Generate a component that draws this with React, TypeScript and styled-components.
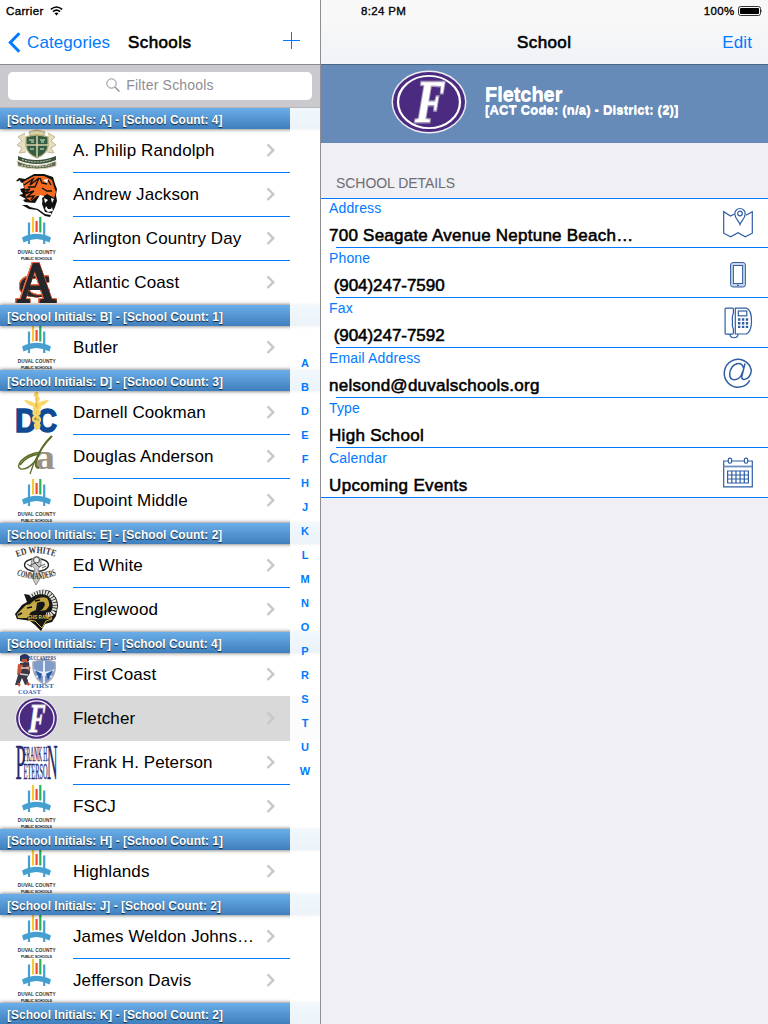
import React from "react";
import styled, { createGlobalStyle } from "styled-components";

const BLUE = "#007aff";
const INK = "#2f5ea3";

const GlobalStyle = createGlobalStyle`
  * { box-sizing: border-box; }
  html, body { margin: 0; padding: 0; }
  body {
    width: 768px;
    height: 1024px;
    overflow: hidden;
    background: #efeff4;
    font-family: "Liberation Sans", Arial, sans-serif;
    color: #000;
  }
  svg { display: block; flex: none; }
`;

const Screen = styled.div`
  display: flex;
  width: 768px;
  height: 1024px;
  overflow: hidden;
`;

const Master = styled.section`
  display: flex;
  flex-direction: column;
  width: 321px;
  border-right: 1px solid #8e8e93;
  background: #fff;
`;

const Detail = styled.section`
  display: flex;
  flex-direction: column;
  width: 447px;
  background: #efeff4;
`;

const TopBar = styled.header<{ $tinted?: boolean }>`
  height: 65px;
  flex: none;
  border-bottom: 1px solid ${(p) => (p.$tinted ? "#4a6687" : "#8a8a8e")};
  background: ${(p) => (p.$tinted ? "linear-gradient(#f8f8f8 35%, #eff2f7)" : "#fff")};
`;

const StatusBar = styled.div<{ $left: number; $right?: number }>`
  display: flex;
  align-items: center;
  height: 20px;
  padding: 1px ${(p) => p.$right ?? 0}px 0 ${(p) => p.$left}px;
`;

const StatusText = styled.span<{ $spacing?: number }>`
  font-size: 11.5px;
  line-height: 20px;
  letter-spacing: ${(p) => p.$spacing ?? 0.35}px;
  -webkit-text-stroke: 0.35px #000;
  white-space: pre;
`;

const Spacer = styled.div`
  flex: 1;
`;

const NavRow = styled.div<{ $pad: string }>`
  display: flex;
  align-items: center;
  height: 44px;
  padding: ${(p) => p.$pad};
`;

const NavLink = styled.a`
  padding-top: 2px;
  color: ${BLUE};
  font-size: 17px;
  line-height: 42px;
  letter-spacing: 0.1px;
`;

const NavTitle = styled.h1`
  margin: 0;
  padding-top: 2px;
  font-size: 17px;
  font-weight: 400;
  line-height: 42px;
  letter-spacing: 0.4px;
  -webkit-text-stroke: 0.6px #000;
`;

const SearchBar = styled.div`
  height: 43px;
  flex: none;
  padding: 7px 8px;
  background: #c9c9ce;
  border-bottom: 1px solid #b4b4b8;
`;

const SearchField = styled.div`
  display: flex;
  align-items: center;
  justify-content: center;
  gap: 6px;
  height: 28px;
  padding-bottom: 2px;
  border-radius: 5px;
  background: #fff;
  color: #8e8e93;
  font-size: 14px;
  letter-spacing: 0.2px;
`;

const ListArea = styled.div`
  position: relative;
  height: 916px;
  overflow: hidden;
`;

const SectionHeader = styled.div`
  position: relative;
  z-index: 1;
  height: 21px;
  padding-left: 7px;
  background: linear-gradient(#6aaee9, #3f7fbd);
  box-shadow: 0 0 4px rgba(0, 0, 0, 0.65);
  color: #fff;
  font-size: 12px;
  font-weight: 700;
  line-height: 24px;
  text-shadow: 0 1px 1px rgba(0, 0, 0, 0.75);
  white-space: pre;
`;

const Row = styled.div<{ $selected?: boolean }>`
  display: flex;
  align-items: center;
  height: 44px;
  padding: 0 45px 0 15px;
  background: ${(p) => (p.$selected ? "#d9d9d9" : "#fff")};
  box-shadow: ${(p) => (p.$selected ? "0 -1px 0 #d9d9d9" : "none")};
`;

const LogoBox = styled.div`
  width: 43px;
  height: 44px;
  margin-right: 15px;
  flex: none;
`;

const RowBody = styled.div<{ $line: boolean }>`
  display: flex;
  align-items: center;
  flex: 1;
  height: 44px;
  margin-right: -15px;
  padding: 0 15px 1px 0;
  border-bottom: 1px solid ${(p) => (p.$line ? BLUE : "transparent")};
`;

const RowName = styled.span`
  flex: 1;
  padding-top: 2px;
  font-size: 17px;
  line-height: 40px;
  letter-spacing: 0.1px;
  white-space: nowrap;
`;

const IndexColumn = styled.nav`
  position: absolute;
  z-index: 2;
  top: 0;
  right: 0;
  bottom: 0;
  display: flex;
  flex-direction: column;
  align-items: center;
  justify-content: center;
  width: 30px;
  padding-top: 1px;
  background: rgba(255, 255, 255, 0.9);
`;

const IndexLetter = styled.span`
  height: 24px;
  color: ${BLUE};
  font-size: 11px;
  font-weight: 700;
  line-height: 24px;
`;

const Hero = styled.div`
  display: flex;
  height: 78px;
  padding: 5px 0 0 70px;
  background: #668bb8;
`;

const HeroText = styled.div`
  display: flex;
  flex-direction: column;
  padding: 16px 0 0 18px;
  color: #fff;
  font-weight: 700;
  white-space: nowrap;
`;

const HeroName = styled.span`
  font-size: 20px;
  line-height: 17px;
  letter-spacing: -0.05px;
  text-shadow: 0 1px 0 #fff;
`;

const HeroMeta = styled.span`
  font-size: 13px;
  line-height: 13px;
  letter-spacing: 0.2px;
  text-shadow: 0 0.5px 0 #fff;
`;

const GroupTitle = styled.h2`
  height: 55px;
  margin: 0;
  padding: 31px 0 0 15px;
  color: #6d6d72;
  font-size: 14px;
  font-weight: 400;
  line-height: 18px;
  letter-spacing: -0.05px;
`;

const Group = styled.div`
  background: linear-gradient(${BLUE}, ${BLUE}) top / 100% 1px no-repeat #fff;
`;

const Field = styled.div<{ $last: boolean }>`
  display: flex;
  align-items: center;
  justify-content: space-between;
  height: 50px;
  padding: 0 15px 0 8px;
  background: linear-gradient(${BLUE}, ${BLUE}) ${(p) => (p.$last ? "0" : "15px")} 49px / 100% 1px no-repeat;
`;

const FieldText = styled.div`
  height: 50px;
`;

const FieldLabel = styled.div`
  color: ${BLUE};
  font-size: 14px;
  line-height: 21px;
  letter-spacing: 0.15px;
`;

const FieldValue = styled.div<{ $spacing: number }>`
  padding-top: 4px;
  font-size: 17px;
  line-height: 25px;
  letter-spacing: ${(p) => p.$spacing}px;
  -webkit-text-stroke: 0.55px #000;
  white-space: pre;
`;

/* ---------- school logos, 43 x 44 ---------- */

const SANS = "Liberation Sans, sans-serif";
const SERIF = "Liberation Serif, serif";

const Duval = () => (
  <svg width="43" height="44" viewBox="0 0 43 44">
    <path d="M18 0v15.500" stroke="#f8c936" strokeWidth="2.200" />
    <path d="M21.600 4v11" stroke="#ef4a36" strokeWidth="2.200" />
    <path d="M25.300 0v15.500" stroke="#27b35a" strokeWidth="2.200" />
    <path d="M14 5.500v21.500M29.200 5.500v21.500" stroke="#459fd0" strokeWidth="2.200" />
    <path d="M7 20.500Q21.500 13 36 20.500L34.500 25.500Q21.500 18.500 8.500 25.500Z" fill="#459fd0" />
    <text x="2.700" y="36.500" fontFamily={SANS} fontSize="4.700" fontWeight="700" fill="#333" textLength="38">DUVAL COUNTY</text>
    <text x="6" y="43" fontFamily={SANS} fontSize="3.700" fontWeight="700" fill="#222" textLength="31">PUBLIC SCHOOLS</text>
  </svg>
);

const Crest = () => (
  <svg width="43" height="44" viewBox="0 0 43 44">
    <path d="M10 4L3 8l4 4-5 4 5 3-3 5 7-1M33 4l7 4-4 4 5 4-5 3 3 5-7-1" fill="#e4ddbf" stroke="#c5b98e" />
    <path d="M14 3l8-2 8 2-2 5H16z" fill="#ddd3a8" stroke="#b1a878" />
    <path d="M11 8q11-4 22 0v9q-1 8-11 12-10-4-11-12z" fill="#345d43" stroke="#b2aa77" strokeWidth="1.300" />
    <path d="M22 7v21M11 16h22" stroke="#d9d2ab" strokeWidth="1.500" />
    <path d="M14 11h5m6 0h5M15 20h4m6 0h4M16 13h3m7 0h3" stroke="#a9c0a0" strokeWidth="1.500" />
    <path d="M3 27q18 8 38 0v4q-19 8-38 0z" fill="#3b513d" />
    <path d="M2 32q20 9 39 0v5q-19 6-38 0z" fill="#5d6950" stroke="#ddd6b8" />
    <path d="M7 30.500q15 5 29 0M6 36q16 4 31-.5" stroke="#d8d6bd" strokeDasharray="2 1" fill="none" />
  </svg>
);

const Tiger = () => (
  <svg width="43" height="44" viewBox="0 0 43 44">
    <path d="M1 8l3-3 6 1 9-5 10 0 9 3 2 7 2 5-1 6 1 6-2 6-3 6-2 4-5-1-8-6-8-1-7-4 6 0-5-5 3-1-7-4 4-1-3-5 4-1-1-5z" fill="#111" />
    <path d="M8 9l11-6 10 0 8 4 2 7 2 5-2 6-7-4-3 2-7 0-6 5-5-3-1-8z" fill="#f36a21" />
    <path d="M9 12l9-6-3 6 9-7-4 9-7 0M6 18l9-2-6 5 10-3-7 6 7-1-3 4M25 5l2 5 5 1M27 15l5 3 5 0M33 7l3 5" fill="none" stroke="#111" strokeWidth="1.400" />
    <path d="M2 9l3-2 1 4zM28 7l5-1-1 4zM8 29l12 1 5-8 4 1-2 8 3 8 6 1 0 2-6-1-7-5-8-2z" fill="#fff" />
    <path d="M27 25l5-3 6 2 2 8-2 6-7-1-3-5z" fill="#111" />
    <path d="M29 25l1 5 3-3zM36 25l1 5 2-4zM30 36l1-3 2 3 3 0 1-2 1 4-5 1z" fill="#fff" />
  </svg>
);

const OutlinedLetters = styled.g`
  filter: drop-shadow(0.8px 0 0 #e96a44) drop-shadow(-0.8px 0 0 #e96a44) drop-shadow(0 0.8px 0 #e96a44)
    drop-shadow(0 -0.8px 0 #e96a44);
`;

const AtlanticCoast = () => (
  <svg width="43" height="44" viewBox="0 0 43 44">
    <g fontFamily={SERIF} fill="#26272a" stroke="#26272a" strokeLinejoin="miter">
      <OutlinedLetters>
        <text x="3" y="36" fontSize="32" fontWeight="700" strokeWidth=".4" textLength="35" lengthAdjust="spacingAndGlyphs">C</text>
      </OutlinedLetters>
      <OutlinedLetters>
        <text x="2" y="41" fontSize="58" strokeWidth="2.200" textLength="39" lengthAdjust="spacingAndGlyphs">A</text>
      </OutlinedLetters>
    </g>
  </svg>
);

const Darnell = () => (
  <svg width="43" height="44" viewBox="0 0 43 44">
    <g fontFamily={SANS} fontWeight="700" fill="#114a94" stroke="#114a94" strokeWidth="1.500">
      <text x="0" y="40.500" fontSize="33" textLength="22" lengthAdjust="spacingAndGlyphs">D</text>
      <text x="22" y="40.500" fontSize="33" textLength="20" lengthAdjust="spacingAndGlyphs">C</text>
    </g>
    <path d="M9 9q6 0 12 4 7-4 13-4-3 5-10 7h-5q-7-2-10-7z" fill="#f8d768" />
    <path d="M21.500 1v38" stroke="#e5b93b" strokeWidth="2" />
    <path d="M19 4q7 2 3 7M18 17q8 3 6 6-8 3-5 7 7 2 5 6l-3 2M26 16q-9 4-7 7 8 4 5 8-6 2-3 6" stroke="#f6d569" strokeWidth="2.600" fill="none" />
    <circle cx="21.500" cy="3" r="2.200" fill="#f4ce4f" />
  </svg>
);

const Douglas = () => (
  <svg width="43" height="44" viewBox="0 0 43 44">
    <text x="20" y="34" fontFamily={SERIF} fontSize="36" fontWeight="700" fill="#9d9184" textLength="20" lengthAdjust="spacingAndGlyphs">a</text>
    <path d="M37 1Q25 12 21 27 20 33 24 33" fill="none" stroke="#5b6c27" strokeWidth="2" />
    <path d="M36 2Q22 16 15 39" fill="none" stroke="#5b6c27" strokeWidth="1.200" />
    <path d="M26 17Q12 19 6 26q-5 6 0 8 7 1 15-9M24 19Q11 21 5 30" fill="none" stroke="#5b6c27" strokeWidth="1.400" />
  </svg>
);

const EdWhite = () => (
  <svg width="43" height="44" viewBox="0 0 43 44">
    <defs>
      <path id="ed-top" d="M2 13Q21 5 41 13" />
      <path id="ed-low" d="M1.500 31Q21 39 41.500 31" />
    </defs>
    <ellipse cx="21.500" cy="21" rx="12" ry="6.500" fill="#fff" stroke="#222" strokeWidth="1.300" />
    <path d="M17 15q5-5 9 0v6l-3 4 3 8-5 8-4-8 3-8-4-4z" fill="#c9c9c9" stroke="#777" strokeWidth=".8" />
    <circle cx="21.500" cy="16" r="3" fill="#eee" stroke="#444" />
    <path d="M14 22l6-3 4 4 6-3M12 20l5 3M27 24l4-2" stroke="#555" fill="none" />
    <text fontFamily={SERIF} fontSize="9.500" fontWeight="700" fill="#333"><textPath href="#ed-top" textLength="39" lengthAdjust="spacingAndGlyphs">ED WHITE</textPath></text>
    <text fontFamily={SERIF} fontSize="9.500" fontWeight="700" fill="#333"><textPath href="#ed-low" textLength="41" lengthAdjust="spacingAndGlyphs">COMMANDERS</textPath></text>
  </svg>
);

const Ram = () => (
  <svg width="43" height="44" viewBox="0 0 43 44">
    <path d="M9 6l6 1q10-8 20-4 8 6 8 15l-2 10-4 6-7 2-4 7-6-6-5-4-5-1-8-1-2-5 7-9 5-3z" fill="#161616" />
    <path d="M15 8q10-7 19-2 8 7 5 17-3 5-8 3" fill="none" stroke="#e5e5df" strokeWidth="4.500" strokeDasharray="2 .8" />
    <path d="M15 16q9-9 17-6 5 7-1 12l-6 1q7-5 4-9-6-1-11 4z" fill="#bfa33c" />
    <path d="M2 26l9-9 11-2-1 7-5 2-4 6H3z" fill="#c9ae4b" />
    <path d="M12 20l5-1M3 27l4-2M20 13l5-1" stroke="#111" strokeWidth="1.500" />
    <path d="M13 32l7 1 7 7 4-7 6-2" fill="none" stroke="#d5b73f" strokeWidth="1" />
    <text x="13" y="30.500" fontFamily={SANS} fontSize="6" fontWeight="700" fill="#e0c44f" textLength="24" lengthAdjust="spacingAndGlyphs">EHS RAMS</text>
  </svg>
);

const FirstCoast = () => (
  <svg width="43" height="44" viewBox="0 0 43 44">
    <path d="M18 9l11-3 11 3q2 16-11 22-12-6-11-22z" fill="#7e9bc9" stroke="#a7acb5" strokeWidth="1.500" />
    <path d="M19 17q10 6 20 0M29 8v22M21 24q8-5 16 0" stroke="#e6edf7" strokeWidth="2" fill="none" />
    <path d="M20 17l7 4-2 6zM38 17l-7 4 2 6z" fill="#2857a6" />
    <text x="13" y="6.500" fontFamily={SERIF} fontSize="7" fontWeight="700" fill="#33467e" textLength="28" lengthAdjust="spacingAndGlyphs">BUCCANEERS</text>
    <path d="M5 3q5-4 9 0v5l-4 2-5-2z" fill="#293763" />
    <path d="M5 10l9-1 1 11-3 5 2 6-4 1-3-7-3 7-4 0 3-10z" fill="#3a3848" />
    <path d="M3 11l5 1-2 8-4 2zM11 12l5 3-3 3zM7 6h5v3H7zM2 30l4 1-2 3zM11 29l5 2-3 2z" fill="#c8552f" />
    <path d="M6 15h8M5 21l8 1" stroke="#d6cfcb" strokeWidth="1.500" />
    <text x="16" y="34.500" fontFamily={SERIF} fontSize="6.500" fontWeight="700" fill="#376bb4" textLength="23" lengthAdjust="spacingAndGlyphs">FIRST</text>
    <text x="3" y="41" fontFamily={SERIF} fontSize="6.500" fontWeight="700" fill="#376bb4" textLength="23" lengthAdjust="spacingAndGlyphs">COAST</text>
  </svg>
);

const Peterson = () => (
  <svg width="43" height="44" viewBox="0 0 43 44">
    <g fontFamily={SERIF} fill="#292b70" stroke="#292b70" strokeWidth=".45">
      <text x="0.500" y="38" fontSize="50" textLength="10" lengthAdjust="spacingAndGlyphs">P</text>
      <text x="8.500" y="20" fontSize="22" textLength="25" lengthAdjust="spacingAndGlyphs">FRANK H.</text>
      <text x="8.500" y="38" fontSize="24" textLength="24" lengthAdjust="spacingAndGlyphs">ETERSO</text>
      <text x="32" y="38" fontSize="50" textLength="10.500" lengthAdjust="spacingAndGlyphs">N</text>
    </g>
  </svg>
);

const FletcherMark = ({ w, h }: { w: number; h: number }) => (
  <svg width={w} height={h} viewBox="0 0 76 76" preserveAspectRatio="none">
    <ellipse cx="38" cy="38" rx="37.500" ry="37.500" fill="#eeebf4" />
    <ellipse cx="38" cy="38" rx="36" ry="35.700" fill="#4b2b7f" />
    <ellipse cx="38" cy="38" rx="31" ry="31" fill="#4b2b7f" stroke="#fff" strokeWidth="2.300" />
    <g fontFamily={SERIF} fontWeight="700" transform="translate(23 62) skewX(-8)">
      <text x="0" y="0" fontSize="72" fill="#fff" stroke="#a89abb" strokeWidth="3.500" paintOrder="stroke" textLength="26" lengthAdjust="spacingAndGlyphs">F</text>
    </g>
  </svg>
);

const FletcherSmall = () => <FletcherMark w={43} h={43} />;

/* ---------- interface icons ---------- */

const WifiIcon = () => (
  <svg width="13" height="10" viewBox="0 0 13 10" fill="none" stroke="#000" strokeWidth="1.500">
    <path d="M.8 3.400Q6.500-1.400 12.200 3.400" />
    <path d="M2.900 5.600Q6.500 2.600 10.100 5.600" />
    <path d="M4.500 7.300Q6.500 5.600 8.500 7.300L6.500 9.400Z" fill="#000" stroke="none" />
  </svg>
);

const BatteryIcon = () => (
  <svg width="25" height="10" viewBox="0 0 25 10">
    <rect x=".5" y=".5" width="22" height="9" rx="2" fill="none" stroke="#333" />
    <rect x="2" y="2" width="19" height="6" rx=".7" />
    <path d="M23.500 3.300q1.300 1.700 0 3.400z" />
  </svg>
);

const BackIcon = () => (
  <svg width="13" height="21" viewBox="0 0 13 21">
    <path d="M11.300 1.300L2.300 10.500l9 9.200" fill="none" stroke={BLUE} strokeWidth="3" />
  </svg>
);

const PlusIcon = () => (
  <svg width="17" height="20" viewBox="0 0 17 20">
    <path d="M8.500 0v17M0 8.500h17" stroke={BLUE} />
  </svg>
);

const SearchIcon = () => (
  <svg width="14" height="14" viewBox="0 0 14 14" fill="none" stroke="#8e8e93">
    <circle cx="5.500" cy="5.500" r="4.700" />
    <path d="M9 9l4.400 4.400" strokeWidth="1.400" />
  </svg>
);

const Chevron = () => (
  <svg width="9" height="14" viewBox="0 0 9 14">
    <path d="M1.500 1.400L7.300 7.200l-5.800 5.800" fill="none" stroke="#c7c7cc" strokeWidth="2.400" />
  </svg>
);

const IconBase = styled.svg`
  width: 30px;
  height: 32px;
  fill: none;
  stroke: ${INK};
  stroke-width: 1.2;
`;

const MapIcon = () => (
  <IconBase viewBox="0 0 30 32">
    <path d="M11.500 7L7.500 9 .7 4.700v21.500l7 3.500 7.300-4 7.300 4 7-3.500V4.700l-6.300 3.500" />
    <path d="M17 17.500c-1.500-4-5.200-6-5.200-10.800a5.200 5.200 0 0 1 10.400 0c0 4.800-3.700 6.800-5.200 10.800z" />
    <circle cx="17" cy="6.500" r="2.300" />
  </IconBase>
);

const MobileIcon = () => (
  <IconBase viewBox="0 0 30 32">
    <rect x="7.600" y="5.500" width="14.800" height="24.500" rx="2.500" fill="#cad6e8" strokeWidth="1" />
    <rect x="10.400" y="8.500" width="9.200" height="18" fill="#fff" strokeWidth="1" />
    <path d="M14 28.300h2" />
  </IconBase>
);

const FaxIcon = () => (
  <IconBase viewBox="0 0 30 32">
    <path d="M3 1.100h6.500q.9 0 .9 1v4l-1 3v10l1 3v4q0 1-.9 1H3q-.9 0-.9-1v-24q0-1 .9-1z" />
    <path d="M12.300 1.100h11c3.500 1 5.200 7 5.200 12.700s-1.800 11.700-5.200 13.200h-11zM7 27c0 5 8 5 8 0" />
    <rect x="15.300" y="4" width="8.500" height="4.800" />
    <path d="M15 12.500h2.400m1.500 0h2.400m1.500 0h2.400M15 16.200h2.400m1.500 0h2.400m1.500 0h2.400M15 19.900h2.400m1.500 0h2.400m1.500 0h2.400" strokeWidth="2.400" />
  </IconBase>
);

const AtIcon = () => (
  <IconBase viewBox="0 0 30 32">
    <path d="M26.800 23.300A13.700 13.900 0 1 1 28.300 13c0 5.500-3.700 9.500-7 9.500-2.300 0-2.900-1.600-2.300-4L22 6.500M20.500 11c-.7-3-2-4.600-4.800-4.600-5 0-9 5.500-9 10.800 0 3.500 1.800 5.500 4.700 5.500 4.200 0 7.200-4 8.400-8.600" strokeWidth="1.500" />
  </IconBase>
);

const CalendarIcon = () => (
  <IconBase viewBox="0 0 30 32">
    <path d="M5.500 4H.7v25.900h28.600V4h-4.800M8.500 4h13" />
    <path d="M.7 9.500h28.600" strokeWidth="1.800" stroke="#6e8fbd" />
    <rect x="5.300" y="1.200" width="3.300" height="5" rx="1.500" />
    <rect x="21.400" y="1.200" width="3.300" height="5" rx="1.500" />
    <path d="M4.600 14h20.800v12H4.600zM4.600 18h20.800M4.600 22h20.800M8.800 14v12M13 14v12M17.100 14v12M21.300 14v12" />
  </IconBase>
);

/* ---------- data ---------- */

type School = { name: string; Logo: React.FC };
type Section = { initial: string; count: number; schools: School[] };

const SECTIONS: Section[] = [
  {
    initial: "A",
    count: 4,
    schools: [
      { name: "A. Philip Randolph", Logo: Crest },
      { name: "Andrew Jackson", Logo: Tiger },
      { name: "Arlington Country Day", Logo: Duval },
      { name: "Atlantic Coast", Logo: AtlanticCoast },
    ],
  },
  { initial: "B", count: 1, schools: [{ name: "Butler", Logo: Duval }] },
  {
    initial: "D",
    count: 3,
    schools: [
      { name: "Darnell Cookman", Logo: Darnell },
      { name: "Douglas Anderson", Logo: Douglas },
      { name: "Dupoint Middle", Logo: Duval },
    ],
  },
  {
    initial: "E",
    count: 2,
    schools: [
      { name: "Ed White", Logo: EdWhite },
      { name: "Englewood", Logo: Ram },
    ],
  },
  {
    initial: "F",
    count: 4,
    schools: [
      { name: "First Coast", Logo: FirstCoast },
      { name: "Fletcher", Logo: FletcherSmall },
      { name: "Frank H. Peterson", Logo: Peterson },
      { name: "FSCJ", Logo: Duval },
    ],
  },
  { initial: "H", count: 1, schools: [{ name: "Highlands", Logo: Duval }] },
  {
    initial: "J",
    count: 2,
    schools: [
      { name: "James Weldon Johns…", Logo: Duval },
      { name: "Jefferson Davis", Logo: Duval },
    ],
  },
  { initial: "K", count: 2, schools: [] },
];

const SELECTED = "Fletcher";
const INDEX = "ABDEFHJKLMNOPRSTUW".split("");

const FIELDS: { label: string; value: string; Icon?: React.FC; spacing: number }[] = [
  { label: "Address", value: "700 Seagate Avenue Neptune Beach…", Icon: MapIcon, spacing: 0.24 },
  { label: "Phone", value: " (904)247-7590", Icon: MobileIcon, spacing: -0.05 },
  { label: "Fax", value: " (904)247-7592", Icon: FaxIcon, spacing: -0.05 },
  { label: "Email Address", value: "nelsond@duvalschools.org", Icon: AtIcon, spacing: 0.26 },
  { label: "Type", value: "High School", spacing: 0.3 },
  { label: "Calendar", value: "Upcoming Events", Icon: CalendarIcon, spacing: 0.35 },
];

const CarrierGroup = styled.div`
  display: flex;
  align-items: center;
  gap: 6px;
`;

const BackGroup = styled.div`
  display: flex;
  align-items: center;
  gap: 6px;
  width: 120px;
`;

export default function App() {
  return (
    <>
      <GlobalStyle />
      <Screen>
        <Master>
          <TopBar>
            <StatusBar $left={6}>
              <CarrierGroup>
                <StatusText>Carrier</StatusText>
                <WifiIcon />
              </CarrierGroup>
            </StatusBar>
            <NavRow $pad="0 20px 0 8px">
              <BackGroup>
                <BackIcon />
                <NavLink>Categories</NavLink>
              </BackGroup>
              <NavTitle>Schools</NavTitle>
              <Spacer />
              <PlusIcon />
            </NavRow>
          </TopBar>
          <SearchBar>
            <SearchField>
              <SearchIcon />
              Filter Schools
            </SearchField>
          </SearchBar>
          <ListArea>
            {SECTIONS.map((section) => (
              <React.Fragment key={section.initial}>
                <SectionHeader>
                  {`[School Initials: ${section.initial}] - [School Count: ${section.count}]`}
                </SectionHeader>
                {section.schools.map(({ name, Logo }, i) => (
                  <Row key={name} $selected={name === SELECTED}>
                    <LogoBox>
                      <Logo />
                    </LogoBox>
                    <RowBody
                      $line={
                        i < section.schools.length - 1 &&
                        name !== SELECTED &&
                        section.schools[i + 1].name !== SELECTED
                      }
                    >
                      <RowName>{name}</RowName>
                      <Chevron />
                    </RowBody>
                  </Row>
                ))}
              </React.Fragment>
            ))}
            <IndexColumn>
              {INDEX.map((letter) => (
                <IndexLetter key={letter}>{letter}</IndexLetter>
              ))}
            </IndexColumn>
          </ListArea>
        </Master>
        <Detail>
          <TopBar $tinted>
            <StatusBar $left={40} $right={5}>
              <StatusText>8:24 PM</StatusText>
              <Spacer />
              <StatusText>100% </StatusText>
              <BatteryIcon />
            </StatusBar>
            <NavRow $pad="0 16px 0 196px">
              <NavTitle>School</NavTitle>
              <Spacer />
              <NavLink>Edit</NavLink>
            </NavRow>
          </TopBar>
          <Hero>
            <FletcherMark w={76} h={64} />
            <HeroText>
              <HeroName>Fletcher</HeroName>
              <HeroMeta>[ACT Code: (n/a) - District: (2)]</HeroMeta>
            </HeroText>
          </Hero>
          <GroupTitle>SCHOOL DETAILS</GroupTitle>
          <Group>
            {FIELDS.map(({ label, value, Icon, spacing }, i) => (
              <Field key={label} $last={i === FIELDS.length - 1}>
                <FieldText>
                  <FieldLabel>{label}</FieldLabel>
                  <FieldValue $spacing={spacing}>{value}</FieldValue>
                </FieldText>
                {Icon && <Icon />}
              </Field>
            ))}
          </Group>
        </Detail>
      </Screen>
    </>
  );
}
